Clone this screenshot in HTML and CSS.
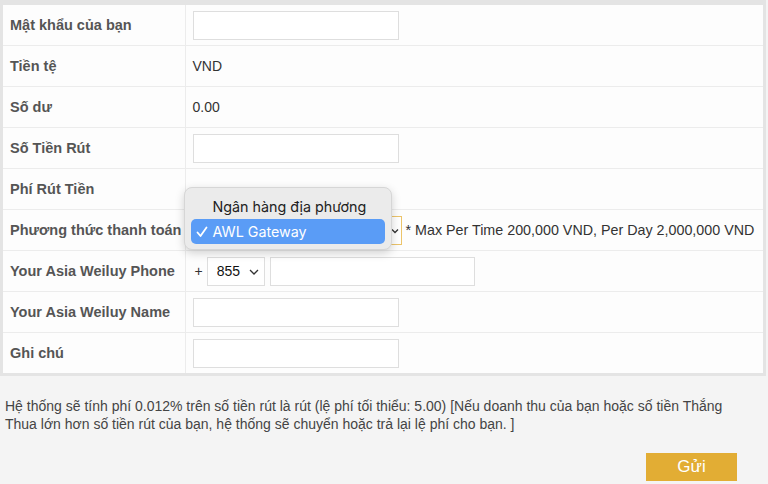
FILE: index.html
```html
<!DOCTYPE html>
<html lang="vi">
<head>
    <meta charset="UTF-8">
    <meta name="viewport" content="width=device-width, initial-scale=1.0">
    <title>Rút tiền</title>
    <link rel="stylesheet" href="styles.css">
</head>
<body>
    <div class="panel">
        <table class="form-table">
            <colgroup>
                <col class="col-label">
                <col>
            </colgroup>
            <tr>
                <td class="label">Mật khẩu của bạn</td>
                <td><input type="password" class="field"></td>
            </tr>
            <tr>
                <td class="label">Tiền tệ</td>
                <td>VND</td>
            </tr>
            <tr>
                <td class="label">Số dư</td>
                <td>0.00</td>
            </tr>
            <tr>
                <td class="label">Số Tiền Rút</td>
                <td><input type="text" class="field"></td>
            </tr>
            <tr>
                <td class="label">Phí Rút Tiền</td>
                <td></td>
            </tr>
            <tr>
                <td class="label">Phương thức thanh toán</td>
                <td class="pay-cell">
                    <div class="pay-row">
                        <span class="select-wrap pay-select">
                            <select class="select">
                                <option>Ngân hàng địa phương</option>
                                <option selected>AWL Gateway</option>
                            </select>
                            <svg class="chev" width="8" height="6" viewBox="0 0 8 6"><path d="M1 1.5 L4 4.5 L7 1.5" fill="none" stroke="#333" stroke-width="1.3"/></svg>
                        </span>
                        <span class="limit">* Max Per Time 200,000 VND, Per Day 2,000,000 VND</span>
                    </div>
                    <!-- open dropdown menu -->
                    <div class="menu">
                        <div class="menu-item">Ngân hàng địa phương</div>
                        <div class="menu-item selected">
                            <svg class="tick" width="12" height="12" viewBox="0 0 12 12"><path d="M1.5 6.5 L4.5 10 L10.5 1.5" fill="none" stroke="#fff" stroke-width="1.8" stroke-linecap="round" stroke-linejoin="round"/></svg>
                            AWL Gateway
                        </div>
                    </div>
                </td>
            </tr>
            <tr>
                <td class="label">Your Asia Weiluy Phone</td>
                <td>
                    <div class="phone-row">
                        <span class="plus">+</span>
                        <span class="select-wrap code-select">
                            <select class="select">
                                <option>855</option>
                            </select>
                            <svg class="chev" width="10" height="6" viewBox="0 0 10 6"><path d="M1 1 L5 5 L9 1" fill="none" stroke="#333" stroke-width="1.3"/></svg>
                        </span>
                        <input type="text" class="field">
                    </div>
                </td>
            </tr>
            <tr>
                <td class="label">Your Asia Weiluy Name</td>
                <td><input type="text" class="field"></td>
            </tr>
            <tr>
                <td class="label">Ghi chú</td>
                <td><input type="text" class="field"></td>
            </tr>
        </table>
    </div>
    <p class="note">Hệ thống sẽ tính phí 0.012% trên số tiền rút là rút (lệ phí tối thiểu: 5.00) [Nếu doanh thu của bạn hoặc số tiền Thắng Thua lớn hơn số tiền rút của bạn, hệ thống sẽ chuyển hoặc trả lại lệ phí cho bạn. ]</p>
    <div class="actions">
        <button class="submit-btn">Gửi</button>
    </div>
</body>
</html>
```

FILE: styles.css
```css
body { margin: 0; background: #f4f4f4; font-family: 'Liberation Sans', Arial, sans-serif; font-size: 14px; color: #333; }
.panel { margin: 0 2px 0 0; border: 3px solid #e4e4e4; border-top-width: 5px; background: #fdfdfd; }
.form-table { width: 100%; border-collapse: collapse; table-layout: fixed; }
.col-label { width: 182px; }
.form-table td { height: 40px; padding: 0 7px; border-bottom: 1px solid #ececec; vertical-align: middle; }
.form-table tr:last-child td { border-bottom: none; }
.form-table td.label { padding: 0 0 0 7px; border-right: 1px solid #ececec; font-weight: bold; font-size: 14.5px; color: #555; white-space: nowrap; overflow: visible; }
.field { display: block; box-sizing: border-box; width: 206px; height: 29px; border: 1px solid #dedede; background: #fff; padding: 0 6px; font: inherit; }
.select-wrap { position: relative; display: inline-block; }
.select { appearance: none; -webkit-appearance: none; box-sizing: border-box; height: 29px; background: #fff; border: 1px solid #dedede; border-radius: 0; font: inherit; color: #111; padding: 0 6px; }
.chev { position: absolute; top: 12px; }
.pay-cell { position: relative; }
.pay-row { display: flex; align-items: center; }
.pay-select .select { width: 209px; border-color: #ecc46a; }
.pay-select .chev { right: 3px; top: 12px; }
.limit { margin-left: 4px; white-space: nowrap; font-size: 14.3px; }
.phone-row { display: flex; align-items: center; }
.plus { margin: 0 4px 0 2px; color: #333; }
.code-select .select { width: 58px; padding-left: 9px; }
.code-select .chev { right: 6px; }
.phone-row .field { margin-left: 5px; width: 205px; }
.menu { position: absolute; left: -2px; top: -23px; width: 194px; padding: 6px 6px 5px; background: #ebebeb; border: 1px solid #d6d6d6; border-radius: 8px; box-shadow: 0 3px 10px rgba(0,0,0,0.18); font-family: 'Inter', 'Liberation Sans', sans-serif; font-size: 14.3px; z-index: 10; }
.menu-item { position: relative; height: 25px; line-height: 25px; padding-left: 22px; color: #222; border-radius: 5px; }
.menu-item.selected { background: #5a9cf6; color: #fff; }
.tick { position: absolute; left: 5px; top: 7px; }
.note { margin: 21px 24px 0 5px; line-height: 18px; color: #444; font-size: 14px; }
.actions { display: flex; justify-content: flex-end; padding: 20px 31px 0 0; }
.submit-btn { width: 91px; height: 28px; border: none; background: #e2ad34; color: #fff; font: inherit; font-size: 17px; cursor: pointer; }
```
